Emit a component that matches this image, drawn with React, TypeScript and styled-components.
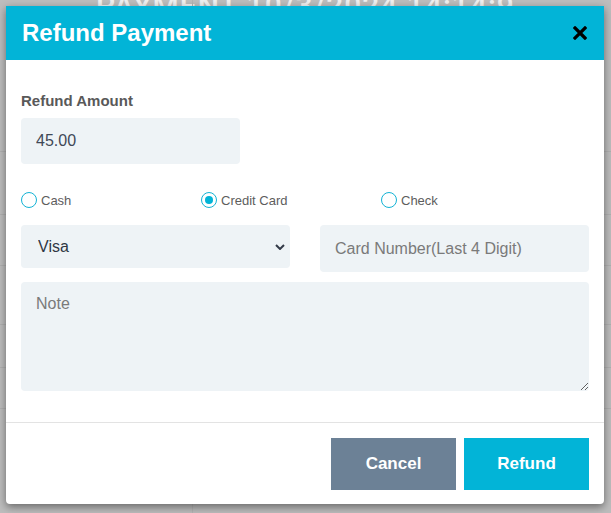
import * as React from 'react';
import styled, {createGlobalStyle} from 'styled-components';

const GlobalStyle = createGlobalStyle`
  html, body {
    margin: 0;
    padding: 0;
    width: 611px;
    height: 513px;
    overflow: hidden;
    background: #bcbcbc;
    font-family: "Liberation Sans", Arial, sans-serif;
  }
`

const Backdrop = styled.div`
  position: relative;
  width: 611px;
  height: 513px;
  background: #bdbdbd;
  overflow: hidden;
`

const PageTitle = styled.div`
  margin-top: -9px;
  text-align: center;
  font-family: Roboto, "Liberation Sans", Arial, sans-serif;
  font-size: 30px;
  font-weight: 500;
  line-height: 30px;
  letter-spacing: 1px;
  color: #f0f0f0;
  white-space: nowrap;
`

const PageRows = styled.div`
  margin-top: 100px;
  display: flex;
  flex-direction: column;
`

const PageRow = styled.div<{ $h: number }>`
  height: ${p => p.$h}px;
  border-bottom: 1px solid #b0b0b0;
`

const PageDivider = styled.div`
  position: absolute;
  left: 192px;
  top: 0;
  bottom: 0;
  border-left: 1px solid #b3b3b3;
`

const Modal = styled.div`
  position: absolute;
  left: 6px;
  top: 6px;
  width: 598px;
  background: #fff;
  border-radius: 0 0 4px 4px;
  box-shadow: 0 3px 8px rgba(0, 0, 0, 0.45);
  display: flex;
  flex-direction: column;
`

const Header = styled.div`
  height: 54px;
  background: #02b4d7;
  padding: 0 17px 0 16px;
  display: flex;
  align-items: center;
  justify-content: space-between;
`

const Title = styled.div`
  font-weight: bold;
  font-size: 24px;
  color: #fff;
`

const CloseButton = styled.button`
  border: none;
  background: none;
  padding: 0;
  width: 14px;
  height: 14px;
  display: flex;
  cursor: pointer;
`

const Body = styled.div`
  padding: 32px 15px 31px;
  display: flex;
  flex-direction: column;
`

const Label = styled.div`
  font-size: 15px;
  font-weight: bold;
  color: #595959;
  line-height: 18px;
  margin-bottom: 8px;
`

const fieldBase = `
  box-sizing: border-box;
  border: none;
  outline: none;
  background: #eef3f6;
  border-radius: 4px;
  font-family: "Liberation Sans", Arial, sans-serif;
  font-size: 16px;
  color: #3f4856;
`

const AmountInput = styled.input`
  ${fieldBase};
  width: 219px;
  height: 46px;
  padding: 0 15px;
`

const RadioRow = styled.div`
  margin-top: 28px;
  display: grid;
  grid-template-columns: 180px 180px 180px;
`

const RadioLabel = styled.label`
  display: flex;
  align-items: center;
  gap: 4px;
  font-size: 13px;
  color: #5d5d5d;
  cursor: pointer;
`

const RadioDot = styled.span<{ $checked: boolean }>`
  box-sizing: border-box;
  width: 16px;
  height: 16px;
  border-radius: 50%;
  border: 1.5px solid #14b3d5;
  display: flex;
  align-items: center;
  justify-content: center;

  &::after {
    content: '';
    width: 8px;
    height: 8px;
    border-radius: 50%;
    background: #02b4d7;
    display: ${p => (p.$checked ? 'block' : 'none')};
  }
`

const FieldRow = styled.div`
  margin-top: 17px;
  display: grid;
  grid-template-columns: 1fr 1fr;
  gap: 30px;
  align-items: start;
`

const Select = styled.select`
  ${fieldBase};
  height: 43px;
  padding: 0 12px 0 17px;
  color: #2f3744;
  appearance: none;
  background-image: url("data:image/svg+xml,%3Csvg xmlns='http://www.w3.org/2000/svg' width='10' height='6' viewBox='0 0 10 6'%3E%3Cpath d='M1 1l4 4 4-4' fill='none' stroke='%23333a48' stroke-width='2'/%3E%3C/svg%3E");
  background-repeat: no-repeat;
  background-position: right 5px center;
`

const CardInput = styled.input`
  ${fieldBase};
  height: 47px;
  padding: 0 15px;

  &::placeholder {
    color: #7a7a7a;
  }
`

const NoteArea = styled.textarea`
  ${fieldBase};
  margin-top: 10px;
  height: 109px;
  padding: 13px 15px;
  resize: vertical;

  &::placeholder {
    color: #7a7a7a;
  }
`

const Footer = styled.div`
  border-top: 1px solid #e3e3e3;
  padding: 15px 15px 14px;
  display: flex;
  justify-content: flex-end;
  gap: 8px;
`

const Button = styled.button<{ $variant: 'cancel' | 'primary' }>`
  width: 125px;
  height: 52px;
  border: none;
  border-radius: 0;
  background: ${p => (p.$variant === 'cancel' ? '#6c8196' : '#02b4d7')};
  color: #fff;
  font-family: "Liberation Sans", Arial, sans-serif;
  font-weight: bold;
  font-size: 17px;
  cursor: pointer;
`

const App: React.FC = () => {
    const [method, setMethod] = React.useState<'cash' | 'credit' | 'check'>('credit');

    const Radio = (value: 'cash' | 'credit' | 'check', text: string) => (
        <RadioLabel onClick={() => setMethod(value)}>
            <RadioDot $checked={method === value}/>
            {text}
        </RadioLabel>
    )

    return (
        <>
            <GlobalStyle/>
            <Backdrop>
                <PageTitle>PAYMENT 10/3/2024 14:14:9</PageTitle>
                <PageRows>
                    <PageRow $h={30}/>
                    <PageRow $h={62}/>
                    <PageRow $h={50}/>
                    <PageRow $h={58}/>
                    <PageRow $h={42}/>
                    <PageRow $h={40}/>
                </PageRows>
                <PageDivider/>
                <Modal>
                    <Header>
                        <Title>Refund Payment</Title>
                        <CloseButton aria-label="close">
                            <svg width="14" height="14" viewBox="0 0 14 14">
                                <path d="M2 2L12 12M12 2L2 12" stroke="#000" strokeWidth="3.2" strokeLinecap="square"/>
                            </svg>
                        </CloseButton>
                    </Header>
                    <Body>
                        <Label>Refund Amount</Label>
                        <AmountInput defaultValue="45.00"/>
                        <RadioRow>
                            {Radio('cash', 'Cash')}
                            {Radio('credit', 'Credit Card')}
                            {Radio('check', 'Check')}
                        </RadioRow>
                        <FieldRow>
                            <Select defaultValue="Visa">
                                <option>Visa</option>
                                <option>MasterCard</option>
                                <option>American Express</option>
                                <option>Discover</option>
                            </Select>
                            <CardInput placeholder="Card Number(Last 4 Digit)"/>
                        </FieldRow>
                        <NoteArea placeholder="Note"/>
                    </Body>
                    <Footer>
                        <Button $variant="cancel">Cancel</Button>
                        <Button $variant="primary">Refund</Button>
                    </Footer>
                </Modal>
            </Backdrop>
        </>
    )
}

export default App;
